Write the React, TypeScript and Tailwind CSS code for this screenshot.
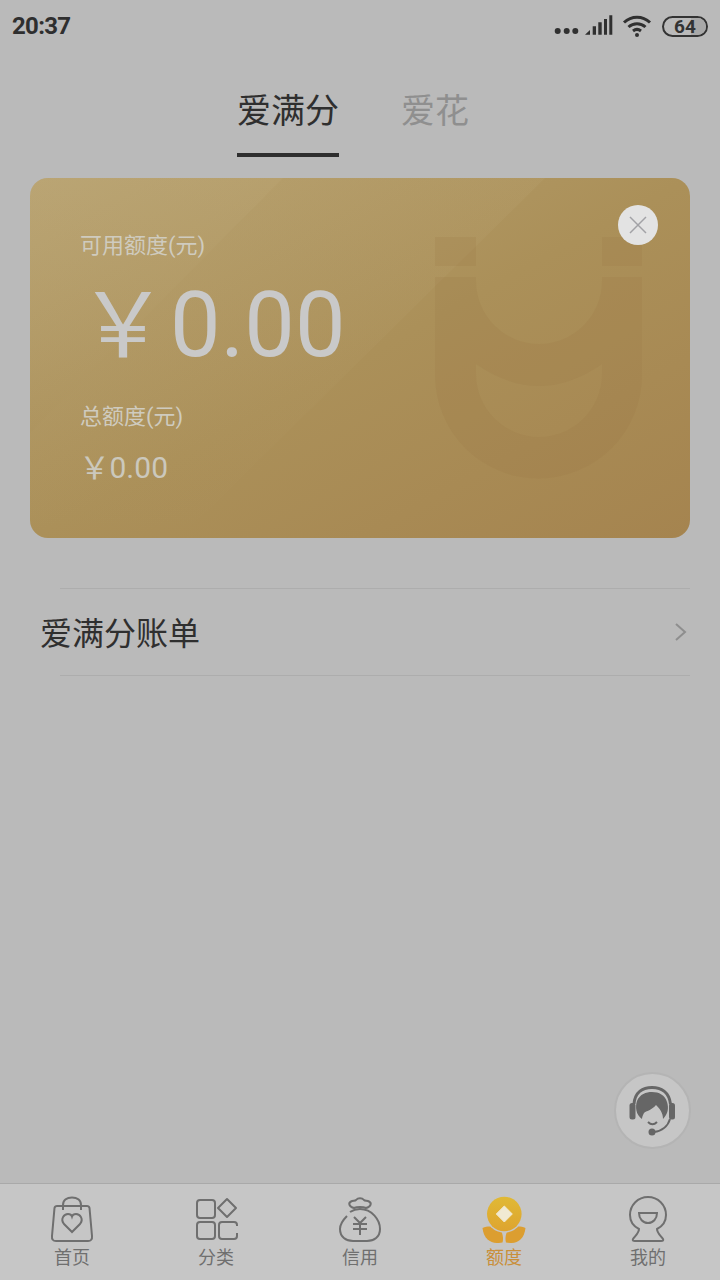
import React from 'react';

const cjk = { fontFamily: 'Roboto, "Noto Sans CJK SC", sans-serif' };
const yuanFont = { fontFamily: '"Noto Sans CJK SC", sans-serif' };

const HomeIcon = () => (
  <svg viewBox="0 0 48 48" className="w-12 h-12" fill="none" stroke="#6f6f6f" strokeWidth="2">
    <path d="M9 11H39Q41 11 41.5 13L44 41Q44.5 46 40 46H8Q3.5 46 4 41L6.5 13Q7 11 9 11Z" />
    <path d="M15 15V10C15 5 19 2.5 24 2.5C29 2.5 33 5 33 10V15" />
    <path d="M24 37L16 29C12 24 16 19 20 19C22 19 23.5 20 24 21.5C24.5 20 26 19 28 19C32 19 36 24 32 29Z" />
  </svg>
);

const CategoryIcon = () => (
  <svg viewBox="0 0 48 48" className="w-12 h-12" fill="none" stroke="#6f6f6f" strokeWidth="2">
    <rect x="5" y="5" width="18" height="18" rx="3" />
    <rect x="5" y="27" width="18" height="17" rx="3" />
    <path d="M35 4L44 13L35 22L26 13Z" strokeLinejoin="round" />
    <path d="M45 31V30Q45 27 42 27H30Q27 27 27 30V41Q27 44 30 44H42Q45 44 45 41V38" />
  </svg>
);

const CreditIcon = () => (
  <svg viewBox="0 0 48 48" className="w-12 h-12" fill="none" stroke="#6f6f6f" strokeWidth="2">
    <path d="M18 13C13 12 12 8 15 6.5C17 5.5 19 6 20 5C22 2.5 26 2.5 28 5C29 6 31 5.5 33 6.5C36 8 35 12 30 13C27 11.5 21 11.5 18 13Z" />
    <path d="M11 21C7 25 4 29 4 34C4 42 10 46 17 46H31C38 46 44 42 44 34C44 25 36 14 24 14C20 14 17 15 14 17" />
    <path d="M18 22L24 28L30 22M24 28V40M17 29H31M17 34H31" />
  </svg>
);

const QuotaIcon = () => (
  <svg viewBox="0 0 48 48" className="w-12 h-12">
    <defs>
      <linearGradient id="coin" x1="0" y1="0" x2="0" y2="1">
        <stop offset="0" stopColor="#e0b935" />
        <stop offset="1" stopColor="#dea42f" />
      </linearGradient>
    </defs>
    <path d="M2.5 33C10 30 19 32 21.5 37C23 40 23.5 44 22.5 47.5C13 49.500 4 46 2.5 33Z" fill="#dc9e30" />
    <path d="M45.5 33C38 30 29 32 27 37C25.5 40 25 44 26 47.5C35.500 49.500 44 46 45.5 33Z" fill="#dc9e30" />
    <circle cx="24.3" cy="19" r="18.6" fill="#c6c6c6" />
    <circle cx="24.3" cy="19" r="17.3" fill="url(#coin)" />
    <path d="M24.3 11L32.3 19L24.3 27L16.3 19Z" fill="#f1ead2" stroke="#f1ead2" strokeLinejoin="round" />
  </svg>
);

const MineIcon = () => (
  <svg viewBox="0 0 48 48" className="w-12 h-12" fill="none" stroke="#6f6f6f" strokeWidth="2">
    <path d="M15 34C9 31 6 26 6 20C6 10 14 2 24 2C34 2 42 10 42 20C42 26 39 31 33 34C33 38 37 41 39 44Q40 46 37 46H11Q8 46 9 44C11 41 15 38 15 34Z" />
    <path d="M15 18H33C33 24 29 28 24 28C19 28 15 24 15 18Z" />
  </svg>
);

const tabs = [
  { label: '首页', icon: <HomeIcon /> },
  { label: '分类', icon: <CategoryIcon /> },
  { label: '信用', icon: <CreditIcon /> },
  { label: '额度', icon: <QuotaIcon />, active: true },
  { label: '我的', icon: <MineIcon /> },
];

export default function App() {
  return (
    <div className="relative w-[720px] h-[1280px] flex flex-col bg-[#bababa] overflow-hidden" style={cjk}>
      {/* Status bar */}
      <div className="h-[52px] flex items-center justify-between pl-3 pr-3">
        <span className="text-[24px] font-bold text-[#2f2f2f] tracking-[-0.7px]">20:37</span>
        <div className="flex items-center">
          <svg viewBox="0 0 70 24" className="w-[70px] h-6" fill="#303030">
            <circle cx="10.7" cy="17" r="3" />
            <circle cx="19.7" cy="17" r="3" />
            <circle cx="28.3" cy="17" r="3" />
            <path d="M38 20.7L43 16V20.7ZM45.7 12.3H49V20.7H45.7ZM51.3 8.3H54.7V20.7H51.3ZM57 5H60V20.7H57ZM62.3 1.3H65.3V20.7H62.3Z" />
          </svg>
          <svg viewBox="0 0 30 24" className="w-[30px] h-6 ml-[5px]" fill="none" stroke="#303030" strokeWidth="3">
            <path d="M2 8.5C9.5 1.5 20.5 1.5 28 8.5" />
            <path d="M6.5 13C11.5 8.5 18.5 8.5 23.5 13" />
            <path d="M11 17C13.5 15 16.5 15 19 17" />
            <circle cx="15" cy="21" r="2" fill="#303030" stroke="none" />
          </svg>
          <div className="relative ml-[10px] w-[46px] h-[21px] rounded-full border-2 border-[#333333] overflow-hidden flex items-center justify-center">
            <div className="absolute right-0 top-0 bottom-0 w-[15px] bg-[#a8a8a8]" />
            <span className="relative text-[19px] font-bold text-[#333333] leading-none">64</span>
          </div>
        </div>
      </div>

      {/* Tabs */}
      <div className="h-[105px] flex justify-center gap-[62px] pt-[36px] mr-[14px]">
        <div className="relative w-[102px] text-center text-[34px] leading-[46px] text-[#2f2f2f]">
          爱满分
          <div className="absolute left-0 right-0 top-[65px] h-1 bg-[#2e2e2e]" />
        </div>
        <div className="text-[34px] leading-[46px] text-[#8f8f8f]">爱花</div>
      </div>

      {/* Card */}
      <div className="relative mx-[30px] mt-[21px] h-[360px] rounded-[18px] overflow-hidden bg-gradient-to-br from-[#b6a06e] via-[#ab9059] to-[#a5844f] pl-[50px] pt-[53px]">
        <svg className="absolute inset-0 w-full h-full" viewBox="0 0 660 360">
          <defs>
            <linearGradient id="sheen" x1="0" y1="0" x2="0" y2="1">
              <stop offset="0" stopColor="#c8b588" stopOpacity="0.22" />
              <stop offset="1" stopColor="#c8b588" stopOpacity="0" />
            </linearGradient>
          </defs>
          <path d="M0 0H253L0 255Z" fill="url(#sheen)" />
          <path d="M253 0H515L150 360H0V255Z" fill="url(#sheen)" opacity="0.5" />
        </svg>
        <svg className="absolute left-[405px] top-[59px] w-[208px] h-[243px]" viewBox="435 237 208 243" fill="#9c7a45" fillOpacity="0.2" fillRule="evenodd">
          <path d="M435 237H476V266H435ZM602 237H642V266H602Z" />
          <path d="M435 277H476V281A63 63 0 0 0 602 281V277H642V375A103.5 103.5 0 0 1 435 375ZM476 364Q539 408 602 364V374A63 63 0 0 1 476 374Z" />
        </svg>
        <div className="absolute left-[588px] top-[27px] w-10 h-10 rounded-full bg-[#e3e3e3] flex items-center justify-center">
          <svg viewBox="0 0 20 20" className="w-5 h-5" fill="none" stroke="#a2a2a6" strokeWidth="1.5">
            <path d="M2 2L18 18M18 2L2 18" />
          </svg>
        </div>

        <div className="relative text-[22px] leading-[30px] text-[#cfcbbf]">可用额度(元)</div>
        <div className="relative flex items-center mt-[15px] -ml-[2px] h-[100px] text-[#c9c9c9]">
          <span className="text-[90px] leading-none mb-[16px]" style={yuanFont}>{'\uFFE5'}</span>
          <span className="text-[90px] leading-none ml-[2px]">0.00</span>
        </div>
        <div className="relative mt-[26px] text-[22px] leading-[30px] text-[#cfcbbf]">总额度(元)</div>
        <div className="relative flex items-center mt-[16px] -ml-[1px] h-[40px] text-[#cbc8bd]">
          <span className="text-[31px] leading-none mb-[6px]" style={yuanFont}>{'\uFFE5'}</span>
          <span className="text-[30px] leading-none ml-[-0.5px]">0.00</span>
        </div>
      </div>

      {/* Bill row */}
      <div className="mt-[50px] ml-[40px] mr-[30px] relative">
        <div className="ml-[20px] h-px bg-[#adadad]" />
        <div className="h-[86px] pt-[3px] flex items-center justify-between">
          <span className="text-[32px] text-[#2f2f2f]">爱满分账单</span>
          <svg viewBox="0 0 14 20" className="w-[14px] h-5 mr-[2px] -mt-[3px]" fill="none" stroke="#8e8e8e" strokeWidth="2">
            <path d="M2 2L11 10L2 18" />
          </svg>
        </div>
        <div className="ml-[20px] h-px bg-[#adadad]" />
      </div>

      <div className="flex-1" />

      {/* Support button */}
      <div className="absolute left-[614px] top-[1072px] w-[77px] h-[77px] rounded-full bg-[#c6c6c6] border-2 border-[#b4b4b4] flex items-center justify-center">
        <svg viewBox="0 0 64 64" className="w-16 h-16">
          <path d="M13 25C14 13 22 8.5 31 8.5C40 8.5 48 13 49.5 25" fill="none" stroke="#666666" strokeWidth="3" />
          <rect x="8.5" y="24" width="6" height="16.5" rx="2.5" fill="#666666" />
          <rect x="48" y="24" width="6" height="16.5" rx="2.5" fill="#666666" />
          <path d="M21 40C15 36 14 28 16 22C19 15 25 13 31 13C38 13 44 16 46 23C48 29 47 35 42 40C42 34 39 30 35 26C31 31 25 32 23 34C22 36 21 38 21 40Z" fill="#666666" />
          <path d="M27 43C30 46 33 46 36 43" fill="none" stroke="#666666" strokeWidth="2" />
          <path d="M49 40C47 47 41 52 33 53" fill="none" stroke="#666666" strokeWidth="2" />
          <circle cx="31" cy="53" r="3.5" fill="#666666" />
        </svg>
      </div>

      {/* Bottom nav */}
      <div className="h-[97px] border-t border-[#a9a9a9] bg-[#c6c6c6] grid grid-cols-5">
        {tabs.map((tab) => (
          <div key={tab.label} className="flex flex-col items-center pt-[11px]">
            {tab.icon}
            <span className={tab.active ? 'text-[18px] leading-[30px] text-[#c98f3a]' : 'text-[18px] leading-[30px] text-[#6f6f6f]'}>
              {tab.label}
            </span>
          </div>
        ))}
      </div>
    </div>
  );
}
